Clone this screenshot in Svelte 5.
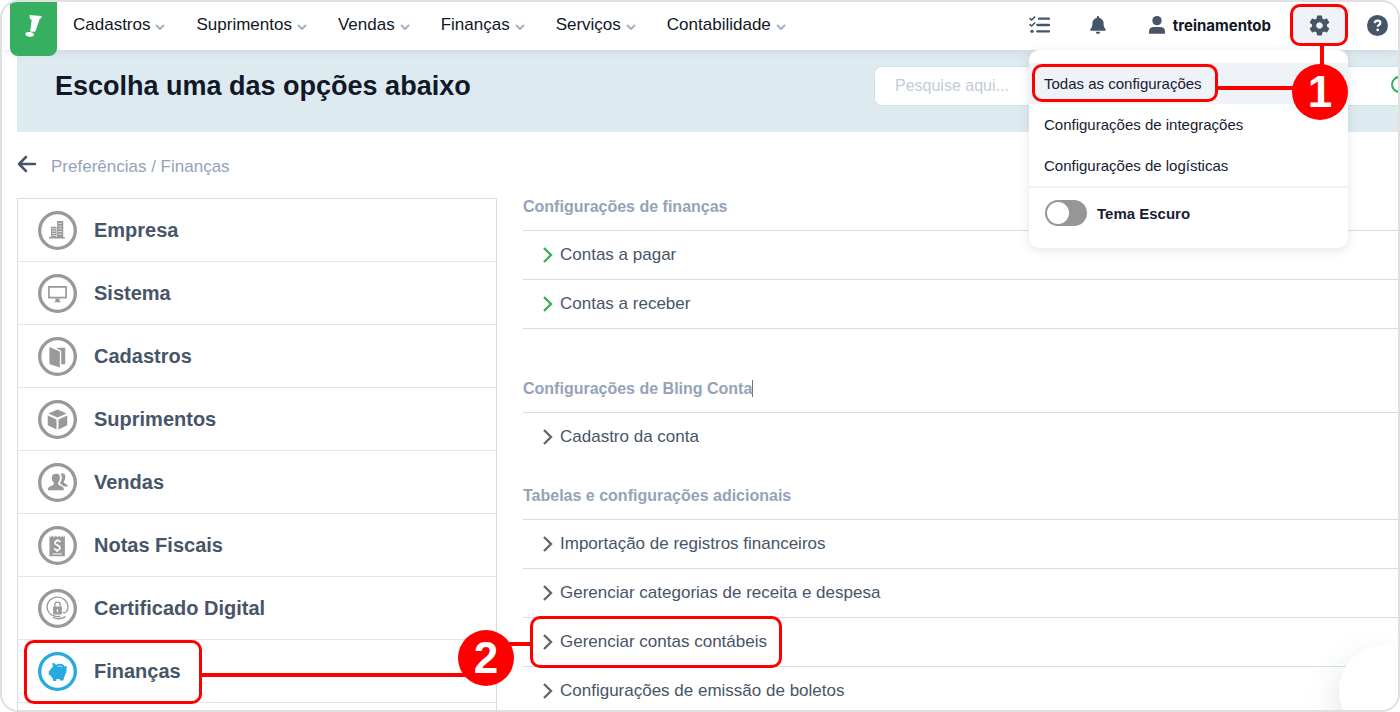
<script lang="ts">
  type Item = { id: string; label: string; active?: boolean };
  type Link = { label: string; green?: boolean; marked?: boolean };
  type Group = { title: string; caret?: boolean; kind: string; links: Link[] };

  const nav = ['Cadastros', 'Suprimentos', 'Vendas', 'Finanças', 'Serviços', 'Contabilidade'];

  const menu = [
    { label: 'Todas as configurações', active: true },
    { label: 'Configurações de integrações', active: false },
    { label: 'Configurações de logísticas', active: false }
  ];

  const items: Item[] = [
    { id: 'empresa', label: 'Empresa' },
    { id: 'sistema', label: 'Sistema' },
    { id: 'cadastros', label: 'Cadastros' },
    { id: 'suprimentos', label: 'Suprimentos' },
    { id: 'vendas', label: 'Vendas' },
    { id: 'notas', label: 'Notas Fiscais' },
    { id: 'certificado', label: 'Certificado Digital' },
    { id: 'financas', label: 'Finanças', active: true }
  ];

  const groups: Group[] = [
    {
      title: 'Configurações de finanças',
      kind: 'closed',
      links: [
        { label: 'Contas a pagar', green: true },
        { label: 'Contas a receber', green: true }
      ]
    },
    {
      title: 'Configurações de Bling Conta',
      caret: true,
      kind: 'open',
      links: [{ label: 'Cadastro da conta' }]
    },
    {
      title: 'Tabelas e configurações adicionais',
      kind: 'open',
      links: [
        { label: 'Importação de registros financeiros' },
        { label: 'Gerenciar categorias de receita e despesa' },
        { label: 'Gerenciar contas contábeis', marked: true },
        { label: 'Configurações de emissão de boletos' }
      ]
    }
  ];

  let dark = $state(false);
  let search = $state('');
</script>

<div class="frame">
  <header class="topbar">
    <a class="logo" href="#inicio" aria-label="Início">
      <svg viewBox="0 0 141 162" width="47" height="54">
        <path d="M59 38L66 40 95 42 94 47 89 51 77 86Q76 89 73 89H63Q60 88 61 84L65 54 59 49z" fill="#fff" />
        <ellipse cx="59" cy="97" rx="13" ry="7" transform="rotate(8 59 97)" fill="#fff" />
      </svg>
    </a>

    <nav class="nav">
      {#each nav as label (label)}
        <button class="nav-item">
          {label}
          <svg viewBox="0 0 10 6" width="10" height="6"><path d="M1 1l4 4 4-4" /></svg>
        </button>
      {/each}
    </nav>

    <div class="tools">
      <button class="tool tasks" aria-label="Tarefas">
        <svg viewBox="0 0 63 54" width="21" height="18" fill="none" stroke="#475569" stroke-linecap="round">
          <path d="M3 8l5 4 9-9M3 26l5 4 9-9" stroke-width="5" />
          <path d="M30 8h30M25 27h35M25 46h35" stroke-width="7" />
          <circle cx="9" cy="46" r="5" fill="#475569" stroke="none" />
        </svg>
      </button>
      <button class="tool" aria-label="Notificações">
        <svg viewBox="0 0 448 512" width="16" height="18" fill="#475569">
          <path d="M224 0c-18 0-32 14-32 32v19C119 66 64 130 64 208v30c0 48-15 92-50 134-18 22-16 44 10 44h400c26 0 28-22 10-44-35-42-50-86-50-134v-30c0-78-55-142-128-157V32c0-18-14-32-32-32zM160 448c0 36 28 64 64 64s64-28 64-64z" />
        </svg>
      </button>
      <button class="tool user">
        <svg viewBox="0 0 48 54" width="16" height="18" fill="#475569">
          <circle cx="24" cy="14" r="14" />
          <path d="M0 53V47Q0 33 15 33H33Q48 33 48 47V53z" />
        </svg>
        treinamentob
      </button>

      <div class="settings">
        <button class="gear" aria-label="Configurações" aria-expanded="true">
          <svg viewBox="0 0 24 24" width="25" height="25" fill="#475569">
            <path d="M19.14 12.94c.04-.3.06-.61.06-.94 0-.32-.02-.64-.07-.94l2.03-1.58c.18-.14.23-.41.12-.61l-1.92-3.32c-.12-.22-.37-.29-.59-.22l-2.39.96c-.5-.38-1.03-.7-1.62-.94l-.36-2.54c-.04-.24-.24-.41-.48-.41h-3.84c-.24 0-.43.17-.47.41l-.36 2.54c-.59.24-1.13.57-1.62.94l-2.39-.96c-.22-.08-.47 0-.59.22L2.74 8.87c-.12.21-.08.47.12.61l2.03 1.58c-.05.3-.09.63-.09.94s.02.64.07.94l-2.03 1.58c-.18.14-.23.41-.12.61l1.92 3.32c.12.22.37.29.59.22l2.39-.96c.5.38 1.03.7 1.62.94l.36 2.54c.05.24.24.41.48.41h3.84c.24 0 .44-.17.47-.41l.36-2.54c.59-.24 1.13-.56 1.62-.94l2.39.96c.22.08.47 0 .59-.22l1.92-3.32c.12-.22.07-.47-.12-.61l-2.01-1.58zM12 15.2c-1.77 0-3.2-1.43-3.2-3.2s1.43-3.2 3.2-3.2 3.2 1.43 3.2 3.2-1.43 3.2-3.2 3.2z" />
          </svg>
        </button>

        <div class="dropdown">
          {#each menu as m (m.label)}
            <a class="dropdown-item" class:active={m.active} href="#config">
              {m.label}
              {#if m.active}<span class="mark mark-menu"></span>{/if}
            </a>
          {/each}
          <label class="theme">
            <input type="checkbox" bind:checked={dark} />
            Tema Escuro
          </label>
        </div>

        <span class="line line-down"></span>
        <span class="line line-menu"></span>
        <span class="badge badge-one">1</span>
      </div>

      <button class="tool" aria-label="Ajuda">
        <svg viewBox="0 0 21 21" width="21" height="21">
          <circle cx="10.5" cy="10.5" r="10.5" fill="#475569" />
          <path d="M7.8 8.1Q8 5.7 10.6 5.7 13.3 5.7 13.3 7.9 13.3 9.2 11.9 10 10.7 10.6 10.7 11.8" fill="none" stroke="#fff" stroke-width="2.2" />
          <circle cx="10.7" cy="14.9" r="1.4" fill="#fff" />
        </svg>
      </button>
    </div>
  </header>

  <main class="page">
    <div class="hero">
      <h1>Escolha uma das opções abaixo</h1>
      <div class="search">
        <input type="text" placeholder="Pesquise aqui..." aria-label="Pesquisar" bind:value={search} />
        <button class="search-btn" aria-label="Buscar">
          <svg viewBox="0 0 20 20" width="20" height="20" fill="none" stroke="#36af61" stroke-width="2">
            <circle cx="8.5" cy="8.5" r="7.5" />
            <path d="M14 14l5 5" />
          </svg>
        </button>
      </div>
    </div>

    <div class="crumbs">
      <a href="#voltar" aria-label="Voltar">
        <svg viewBox="0 0 20 20" width="20" height="20" fill="none" stroke="#475569" stroke-width="2.5" stroke-linecap="round" stroke-linejoin="round">
          <path d="M9 3L2 10l7 7M2 10h16" />
        </svg>
      </a>
      <span>Preferências / Finanças</span>
    </div>

    <div class="columns">
      <ul class="side">
        {#each items as item (item.id)}
          <li>
            <a class="side-item" href="#{item.id}">
              <svg class="icon" class:active={item.active} viewBox="0 0 116 116" width="39" height="39">
                <circle class="ring" cx="58" cy="58" r="53" />
                {#if item.id === 'empresa'}
                  <path d="M33 77h47v5H33zM39 47h16v30H39zM57 30h18v47H57z" />
                  <path class="cut" d="M42 53h11M42 60h11M42 67h11M42 73h11M61 37h10M61 45h10M61 53h10M61 61h10M61 69h10" stroke-width="2" />
                {:else if item.id === 'sistema'}
                  <path d="M30 36h56v37H30zM35 41v27h46V41z" fill-rule="evenodd" />
                  <path d="M52 73h12v7l5 4H47l5-4z" />
                {:else if item.id === 'cadastros'}
                  <path d="M34 30l31 13v48L34 80zM53 32h28v49H69V41z" />
                {:else if item.id === 'suprimentos'}
                  <path d="M58 28l27 12-27 12-27-12zM29 46l26 12v30L29 75zM87 46L61 58v30l26-13z" />
                {:else if item.id === 'vendas'}
                  <path d="M67 33Q72 29 77 32 83 35 81 45 80 51 77 54 76 58 79 60L86 64Q88 66 88 70H77Q72 64 65 61 71 51 71 43 71 37 67 33z" />
                  <path d="M54 32C63 32 66 38 65 46 64 53 61 57 60 59 59 64 62 66 67 68 74 71 77 73 77 81H29C29 73 33 71 40 68 46 66 48 64 47 59 44 56 42 52 41 46 40 37 45 32 54 32z" />
                {:else if item.id === 'notas'}
                  <path d="M34 28l4 6 5-6 5 6 5-6 5 6 5-6 5 6 5-6 3 6 4-6v62H34z" />
                  <path class="cut" d="M67 47Q63 43 57 44 50 45 50 50 50 54 57 57 66 60 65 66 64 72 57 72 51 72 48 67M58 39v6M57 71v6" stroke-width="5" />
                  <path class="cut" d="M43 83h28" stroke-width="3" />
                {:else if item.id === 'certificado'}
                  <path class="stroke" d="M73 69Q79 73 84 68 90 61 89 53A31 29 0 1 0 66 81M44 84Q61 94 82 82" stroke-width="4" />
                  <path d="M45 52h26v24H45z" />
                  <path class="stroke" d="M50 53V47Q50 39 58 39 66 39 66 47V53" stroke-width="4" />
                  <path class="cut" d="M58 60v9" stroke-width="4" />
                {:else}
                  <path d="M43 31Q50 34 54 38C66 32 76 36 80 44 84 44 83 39 86 42L85 48Q87 60 79 72L75 85H66L64 80H55L54 86H46L43 77Q39 74 37 70L32 67V57L37 53Q40 46 45 43 42 37 43 31z" />
                  <path class="cut" d="M58 43Q65 40 72 44" stroke-width="2" />
                {/if}
              </svg>
              {item.label}
            </a>
            {#if item.active}
              <span class="mark mark-side"></span>
              <span class="line line-side"></span>
              <span class="badge badge-two">2</span>
            {/if}
          </li>
        {/each}
      </ul>

      <div class="content">
        {#each groups as group (group.title)}
          <section class="group {group.kind}">
            <h2><span class:caret={group.caret}>{group.title}</span></h2>
            <ul>
              {#each group.links as link (link.label)}
                <li>
                  <a class="row" class:green={link.green} href="#opcao">
                    <svg viewBox="0 0 10 16" width="10" height="16"><path d="M1 1l7 7-7 7" /></svg>
                    {link.label}
                  </a>
                  {#if link.marked}
                    <span class="line line-row"></span>
                    <span class="mark mark-row"></span>
                  {/if}
                </li>
              {/each}
            </ul>
          </section>
        {/each}
      </div>
    </div>
  </main>

  <div class="chat"></div>
</div>

<style>
  :global(body) {
    background: #fff;
  }

  .frame {
    position: relative;
    box-sizing: border-box;
    height: 100vh;
    overflow: hidden;
    border: 2px solid #e0e0e0;
    border-radius: 18px;
    background: #fff;
    color: #475569;
    font-family: "Liberation Sans", Arial, sans-serif;
    font-size: 17px;
  }

  a {
    color: inherit;
    text-decoration: none;
  }

  button {
    padding: 0;
    border: none;
    background: none;
    color: #111827;
    font: inherit;
    cursor: pointer;
  }

  ul {
    margin: 0;
    padding: 0;
    list-style: none;
  }

  svg {
    display: block;
    flex: none;
  }

  .topbar {
    position: relative;
    z-index: 5;
    display: flex;
    align-items: center;
    box-sizing: border-box;
    height: 48px;
    padding: 0 10px 2px 8px;
    background: #fff;
    box-shadow: 0 1px 8px rgba(71, 85, 105, 0.14);
  }

  .logo {
    align-self: flex-start;
    height: 54px;
    border-radius: 0 0 8px 8px;
    background: #36af61;
  }

  .nav {
    display: flex;
    gap: 31px;
    margin-left: 16px;
  }

  .nav-item {
    display: flex;
    align-items: center;
    gap: 5px;
  }

  .nav-item svg {
    margin-top: 4px;
    fill: none;
    stroke: #a3b1c6;
    stroke-width: 2;
  }

  .tools {
    display: flex;
    align-items: center;
    margin-left: auto;
    gap: 19px;
  }

  .tasks {
    margin-right: 21px;
  }

  .user {
    display: flex;
    align-items: center;
    gap: 8px;
    margin-left: 24px;
    font-family: Inter, sans-serif;
    font-size: 15px;
    font-weight: 700;
  }

  .settings {
    position: relative;
  }

  .gear {
    display: flex;
    align-items: center;
    justify-content: center;
    box-sizing: border-box;
    width: 58px;
    height: 42px;
    border: 3px solid #f00;
    border-radius: 10px;
    background: #eff2f7;
  }

  .dropdown {
    position: absolute;
    top: 46px;
    right: 0;
    box-sizing: border-box;
    width: 319px;
    padding-top: 13px;
    border-radius: 10px;
    background: #fff;
    box-shadow: 0 2px 10px rgba(71, 85, 105, 0.16);
    color: #172033;
    font-size: 15px;
  }

  .dropdown-item {
    position: relative;
    display: block;
    padding: 0 15px;
    line-height: 41px;
  }

  .dropdown-item.active {
    background: #eff2f7;
  }

  .theme {
    display: flex;
    align-items: center;
    gap: 10px;
    height: 50px;
    padding: 0 16px 10px;
    border-top: 2px solid #eff2f7;
    font-weight: 700;
  }

  .theme input {
    appearance: none;
    display: flex;
    box-sizing: border-box;
    width: 42px;
    height: 26px;
    margin: 0;
    padding: 2px;
    border-radius: 13px;
    background: #969696;
  }

  .theme input::before {
    content: "";
    width: 22px;
    height: 22px;
    border-radius: 50%;
    background: #fff;
  }

  .theme input:checked {
    justify-content: flex-end;
    background: #36af61;
  }

  .page {
    padding-left: 15px;
  }

  .hero {
    display: flex;
    align-items: flex-start;
    justify-content: space-between;
    box-sizing: border-box;
    height: 82px;
    padding: 16px 0 0 38px;
    background: #ddeaf0;
  }

  h1 {
    margin: 0;
    color: #111827;
    font-size: 27px;
    line-height: 40px;
  }

  .search {
    display: flex;
    align-items: center;
    box-sizing: border-box;
    width: 552px;
    height: 40px;
    margin-right: -28px;
    padding: 0 14px 0 20px;
    border: 1px solid #d3e0e8;
    border-radius: 8px;
    background: #fff;
  }

  .search input {
    flex: 1;
    min-width: 0;
    padding: 0;
    border: none;
    outline: none;
    background: none;
    color: #475569;
    font: inherit;
    font-size: 16px;
  }

  .search input::placeholder {
    color: #c3ccd8;
  }

  .crumbs {
    display: flex;
    align-items: flex-start;
    gap: 14px;
    padding: 22px 0 18px;
    color: #94a3b8;
    line-height: 26px;
  }

  .columns {
    display: grid;
    grid-template-columns: minmax(280px, 480px) 1fr;
    gap: 26px;
  }

  .side {
    border: 1px solid #d5dee8;
  }

  .side li {
    position: relative;
    height: 62px;
    border-bottom: 1px solid #dfe6ee;
  }

  .side-item {
    display: flex;
    align-items: center;
    gap: 17px;
    height: 100%;
    padding-left: 20px;
    font-size: 20px;
    font-weight: 700;
  }

  .icon {
    fill: #999;
    stroke: none;
  }

  .icon.active {
    fill: #27aae1;
  }

  .icon .ring {
    fill: none;
    stroke: #999;
    stroke-width: 10;
  }

  .icon.active .ring {
    stroke: #27aae1;
  }

  .icon .cut {
    fill: none;
    stroke: #fff;
  }

  .icon .stroke {
    fill: none;
    stroke: #999;
  }

  h2 {
    margin: 0;
    padding-bottom: 14px;
    color: #94a3b8;
    font-size: 16px;
    line-height: 18px;
  }

  .caret {
    border-right: 1px solid #64748b;
  }

  .group.closed {
    margin-bottom: 51px;
  }

  .group.closed ul {
    border-bottom: 1px solid #d5dee8;
  }

  .group.open {
    margin-bottom: 26px;
  }

  .group li {
    position: relative;
    border-top: 1px solid #d5dee8;
  }

  .row {
    display: flex;
    align-items: center;
    gap: 7px;
    height: 48px;
    padding-left: 20px;
  }

  .row svg {
    fill: none;
    stroke: #666;
    stroke-width: 2.4;
  }

  .row.green svg {
    stroke: #36af61;
  }

  .mark {
    position: absolute;
    z-index: 1;
    box-sizing: border-box;
    border: 3px solid #f00;
    border-radius: 10px;
    pointer-events: none;
  }

  .mark-menu {
    top: 1px;
    left: 3px;
    width: 186px;
    height: 38px;
  }

  .mark-side {
    top: 0;
    left: 6px;
    width: 178px;
    height: 64px;
  }

  .mark-row {
    top: -2px;
    left: 7px;
    width: 252px;
    height: 52px;
  }

  .line {
    position: absolute;
    background: #f00;
  }

  .line-down {
    top: 40px;
    right: 24px;
    width: 4px;
    height: 30px;
  }

  .line-menu {
    top: 82px;
    right: 48px;
    width: 83px;
    height: 4px;
  }

  .line-side {
    top: 33px;
    left: 182px;
    width: 270px;
    height: 4px;
  }

  .line-row {
    top: 24px;
    left: -17px;
    width: 26px;
    height: 4px;
  }

  .badge {
    position: absolute;
    z-index: 2;
    width: 56px;
    height: 56px;
    border-radius: 50%;
    background: #f00;
    color: #fff;
    font-size: 44px;
    font-weight: 700;
    line-height: 56px;
    text-align: center;
  }

  .badge-one {
    top: 60px;
    right: 0;
  }

  .badge-two {
    top: -10px;
    left: 440px;
  }

  .chat {
    position: absolute;
    right: -32px;
    bottom: -26px;
    width: 91px;
    height: 91px;
    border-radius: 50%;
    background: #fff;
    box-shadow: -6px 10px 30px rgba(60, 100, 90, 0.12);
  }
</style>
